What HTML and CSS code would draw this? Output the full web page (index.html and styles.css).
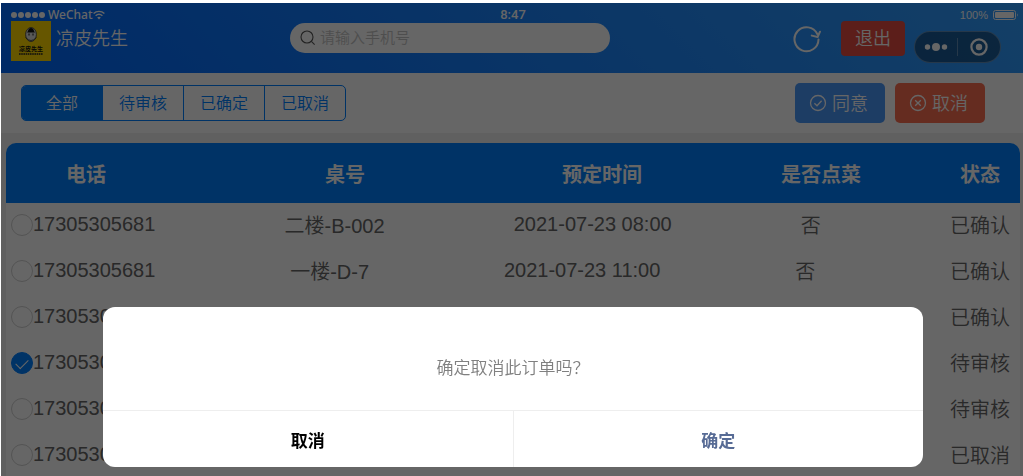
FILE: index.html
```
<!DOCTYPE html>
<html lang="zh-CN">
<head>
  <meta charset="UTF-8" />
  <meta name="viewport" content="width=device-width, initial-scale=1.0" />
  <title>凉皮先生</title>
  <link rel="stylesheet" href="styles.css">
</head>
<body>
  <div class="app">
    <header class="header">
      <div class="status-bar">
        <div class="signal">
          <i></i><i></i><i></i><i></i><i></i>
          <span>WeChat</span>
          <svg width="12" height="10" viewBox="0 0 12 10" fill="none" stroke="currentColor" stroke-width="1.4">
            <path d="M0.6 3.6C3.6 0.6 8.4 0.6 11.4 3.6M2.6 5.8C4.6 3.9 7.4 3.9 9.4 5.8"/>
            <path d="M4.2 7.4Q6 6.1 7.8 7.4L6 9.4Z" fill="currentColor" stroke="none"/>
          </svg>
        </div>
        <div class="time">8:47</div>
        <div class="battery">
          <span>100%</span>
          <svg width="26" height="10" viewBox="0 0 26 10">
            <rect x="0.5" y="0.5" width="22" height="9" rx="2" fill="none" stroke="currentColor"/>
            <rect x="2" y="2" width="19" height="6" rx="1" fill="currentColor"/>
            <path d="M24 3.2Q25.6 5 24 6.8Z" fill="currentColor"/>
          </svg>
        </div>
      </div>

      <div class="nav">
        <div class="brand">
          <svg class="logo" viewBox="0 0 40 40">
            <rect width="40" height="40" fill="#ffd800"/>
            <ellipse cx="20" cy="13.5" rx="5.4" ry="7" fill="#ddd" stroke="#333" stroke-width="0.8"/>
            <path d="M17 10Q17.500 7 20 7Q22.500 7 23 10L24 11.500H16Z" fill="#111"/>
            <path d="M18 12.500V14.500M22 12.500V14.500" stroke="#111"/>
            <path d="M14.500 16.500Q20 22.500 25.500 16.500" stroke="#333" fill="none" stroke-width="0.8"/>
            <text x="20" y="30" class="logo-name">凉皮先生</text>
            <path d="M8 33H32" stroke="#222" stroke-width="1.4" stroke-dasharray="1.6 0.6"/>
          </svg>
          <span class="brand-name">凉皮先生</span>
        </div>
        <label class="search">
          <svg width="16" height="16" viewBox="0 0 16 16" fill="none" stroke="#555" stroke-width="1.1">
            <circle cx="7" cy="7" r="6"/>
            <path d="M11.4 11.4L14.600 14.600"/>
          </svg>
          <input type="text" placeholder="请输入手机号" aria-label="请输入手机号">
        </label>
        <button class="refresh" aria-label="刷新">
          <svg width="28" height="28" viewBox="0 0 28 28" fill="none" stroke="currentColor" stroke-width="2" stroke-linecap="round" stroke-linejoin="round">
            <path d="M25.500 14.500A12 12 0 1 1 24.300 9"/>
            <path d="M18.800 10.600L24.600 12L27 6.700"/>
          </svg>
        </button>
        <button class="logout">退出</button>
      </div>

      <div class="capsule">
        <button aria-label="更多">
          <svg width="24" height="10" viewBox="0 0 24 10" fill="currentColor">
            <circle cx="3.500" cy="5" r="2.700"/>
            <circle cx="12" cy="5" r="4"/>
            <circle cx="20.500" cy="5" r="2.700"/>
          </svg>
        </button>
        <button aria-label="关闭">
          <svg width="18" height="18" viewBox="0 0 18 18">
            <circle cx="9" cy="9" r="7.600" fill="none" stroke="currentColor" stroke-width="2.200"/>
            <circle cx="9" cy="9" r="3.200" fill="currentColor"/>
          </svg>
        </button>
      </div>
    </header>

    <div class="toolbar">
      <div class="tabs">
        <button class="tab active">全部</button>
        <button class="tab">待审核</button>
        <button class="tab">已确定</button>
        <button class="tab">已取消</button>
      </div>
      <div class="actions">
        <button class="btn agree">
          <svg width="18" height="18" viewBox="0 0 18 18" fill="none" stroke="currentColor" stroke-width="1.300">
            <circle cx="9" cy="9" r="7.500"/>
            <path d="M5.400 9.300L8 11.800L12.600 6.800"/>
          </svg>
          <span>同意</span>
        </button>
        <button class="btn reject">
          <svg width="18" height="18" viewBox="0 0 18 18" fill="none" stroke="currentColor" stroke-width="1.300">
            <circle cx="9" cy="9" r="7.500"/>
            <path d="M6.200 6.200L11.800 11.800M11.800 6.200L6.200 11.800"/>
          </svg>
          <span>取消</span>
        </button>
      </div>
    </div>

    <table class="orders">
      <thead>
        <tr><th>电话</th><th>桌号</th><th>预定时间</th><th>是否点菜</th><th>状态</th></tr>
      </thead>
      <tbody>
        <tr>
          <td><input type="radio" name="order" id="o1"><label for="o1">17305305681</label></td>
          <td>二楼-B-002</td><td>2021-07-23 08:00</td><td>否</td><td>已确认</td>
        </tr>
        <tr>
          <td><input type="radio" name="order" id="o2"><label for="o2">17305305681</label></td>
          <td>一楼-D-7</td><td>2021-07-23 11:00</td><td>否</td><td>已确认</td>
        </tr>
        <tr>
          <td><input type="radio" name="order" id="o3"><label for="o3">17305305681</label></td>
          <td>一楼-D-7</td><td>2021-07-23 11:00</td><td>否</td><td>已确认</td>
        </tr>
        <tr>
          <td><input type="radio" name="order" id="o4" checked><label for="o4">17305305681</label></td>
          <td>一楼-D-7</td><td>2021-07-23 11:00</td><td>否</td><td>待审核</td>
        </tr>
        <tr>
          <td><input type="radio" name="order" id="o5"><label for="o5">17305305681</label></td>
          <td>一楼-D-7</td><td>2021-07-23 11:00</td><td>否</td><td>待审核</td>
        </tr>
        <tr>
          <td><input type="radio" name="order" id="o6"><label for="o6">17305305681</label></td>
          <td>一楼-D-7</td><td>2021-07-23 11:00</td><td>否</td><td>已取消</td>
        </tr>
      </tbody>
    </table>
  </div>

  <div class="mask">
    <div class="modal" role="dialog" aria-modal="true">
      <p>确定取消此订单吗？</p>
      <div class="modal-footer">
        <button>取消</button>
        <button class="confirm">确定</button>
      </div>
    </div>
  </div>
</body>
</html>
```
FILE: styles.css
```
:root {
  --primary: #007fff;
  --page: #f0f0f0;
  --text: #666;
}
* {
  box-sizing: border-box;
}
body {
  margin: 0;
  padding: 3px 0 0 1px;
  height: 100vh;
  overflow: hidden;
  background: #fff;
  color: var(--text);
  font-family: "Liberation Sans", "Noto Sans CJK SC", sans-serif;
  font-weight: 350;
}
button, input {
  font: inherit;
}
button {
  border: none;
  padding: 0;
  background: none;
  color: inherit;
  cursor: pointer;
}
svg {
  display: block;
  flex: none;
}
.app {
  min-height: 100%;
  background: var(--page);
}

/* header */
.header {
  position: relative;
  height: 70px;
  background: linear-gradient(45deg, #0069ff, #329eff);
  color: #fff;
}
.status-bar {
  display: grid;
  grid-template-columns: 1fr auto 1fr;
  align-items: center;
  height: 18px;
  padding: 3px 4px 0 10px;
}
.signal, .battery {
  display: flex;
  align-items: center;
}
.signal {
  font: 500 12px "Noto Sans", sans-serif;
}
.signal i {
  width: 6px;
  height: 6px;
  margin-right: 1px;
  border-radius: 50%;
  background: #fff;
}
.signal span {
  margin-left: 2px;
}
.time {
  margin-right: 4px;
  font: 500 13px Roboto, sans-serif;
}
.battery {
  justify-content: flex-end;
  gap: 5px;
  font-size: 11px;
}
.nav {
  display: flex;
  align-items: center;
  height: 35px;
  padding: 0 118px 0 10px;
}
.brand {
  display: flex;
  align-self: flex-start;
  width: 279px;
  font-size: 18px;
  line-height: 36px;
}
.logo {
  width: 40px;
  height: 40px;
}
.logo-name {
  font-size: 6px;
  font-weight: bold;
  text-anchor: middle;
  fill: #111;
}
.brand-name {
  margin-left: 5px;
}
.search {
  display: flex;
  align-items: center;
  gap: 4px;
  width: 320px;
  height: 30px;
  margin-bottom: 2px;
  padding: 0 10px;
  border-radius: 15px;
  background: #fff;
}
.search input {
  flex: 1;
  min-width: 0;
  border: none;
  outline: none;
  background: none;
  padding: 0;
  font-size: 15px;
}
.search input::placeholder {
  color: #c4c4c4;
}
.refresh {
  margin-left: auto;
}
.logout {
  width: 64px;
  height: 35px;
  margin-left: 20px;
  padding-bottom: 3px;
  border-radius: 4px;
  background: #e54d42;
  font-size: 18px;
}

/* floats over the header, like the native menu */
.capsule {
  position: absolute;
  top: 28px;
  right: 22px;
  display: flex;
  align-items: center;
  width: 87px;
  height: 32px;
  border: 1px solid rgba(255, 255, 255, 0.3);
  border-radius: 16px;
  background: rgba(0, 0, 0, 0.4);
}
.capsule button {
  flex: 1;
  display: flex;
  justify-content: center;
}
.capsule button + button {
  height: 18px;
  border-left: 1px solid rgba(255, 255, 255, 0.3);
}

/* toolbar */
.toolbar {
  display: flex;
  align-items: center;
  justify-content: space-between;
  height: 60px;
  padding: 0 38px 0 20px;
  background: #fff;
}
.tabs {
  display: flex;
  width: 325px;
  height: 36px;
  border: 1px solid var(--primary);
  border-radius: 5px;
  overflow: hidden;
}
.tab {
  flex: 1;
  padding-bottom: 2px;
  color: var(--primary);
  font-size: 16px;
}
.tab + .tab {
  border-left: 1px solid var(--primary);
}
.tab.active {
  background: var(--primary);
  color: #fff;
}
.actions {
  display: flex;
  gap: 10px;
}
.btn {
  display: flex;
  align-items: center;
  justify-content: center;
  gap: 5px;
  width: 90px;
  height: 40px;
  padding-right: 3px;
  border-radius: 5px;
  color: #fff;
  font-size: 18px;
}
.btn span {
  padding-bottom: 2px;
}
.agree {
  background: #4a98fb;
}
.reject {
  background: #fd6e52;
}

/* orders */
.orders {
  display: block;
  margin: 10px 3px 0 5px;
  border-radius: 10px 10px 0 0;
  overflow: hidden;
  background: #fff;
  font-size: 20px;
}
.orders thead, .orders tbody {
  display: block;
}
.orders th, .orders td {
  padding: 0;
  white-space: nowrap;
}
.orders thead tr {
  display: grid;
  grid-template-columns: 259fr 237fr 219fr 179fr 60fr;
  align-items: center;
  height: 60px;
  padding-left: 60px;
  background: var(--primary);
  color: #fff;
  text-align: left;
}
.orders tbody tr {
  display: flex;
  align-items: center;
  justify-content: space-between;
  height: 46px;
  padding: 0 10px 2px 5px;
}
.orders td, .orders label {
  padding-bottom: 2px;
}
.orders td:first-child {
  display: flex;
  align-items: center;
  padding: 0;
}
.orders input {
  appearance: none;
  display: flex;
  align-items: center;
  justify-content: center;
  width: 22px;
  height: 22px;
  margin: 0;
  border: 1px solid #d1d1d1;
  border-radius: 50%;
}
.orders input:checked {
  border-color: var(--primary);
  background: var(--primary);
}
.orders input:checked::before {
  content: "";
  width: 11px;
  height: 6px;
  margin-bottom: 2px;
  border: solid #fff;
  border-width: 0 0 1px 1px;
  transform: rotate(-45deg);
}

/* confirm dialog */
.mask {
  position: fixed;
  inset: 3px 0 0 1px;
  display: flex;
  align-items: flex-start;
  padding: 304px 100px 0 102px;
  background: rgba(0, 0, 0, 0.6);
}
.modal {
  flex: 1;
  border-radius: 12px;
  overflow: hidden;
  background: #fff;
  text-align: center;
  font-size: 17px;
}
.modal p {
  margin: 0;
  padding: 50px 24px 29px;
  line-height: 24px;
  color: #808080;
}
.modal-footer {
  display: flex;
  border-top: 1px solid #eee;
}
.modal-footer button {
  flex: 1;
  height: 56px;
  color: #000;
  font-weight: bold;
}
.modal-footer .confirm {
  border-left: 1px solid #eee;
  color: #576b95;
}
```
